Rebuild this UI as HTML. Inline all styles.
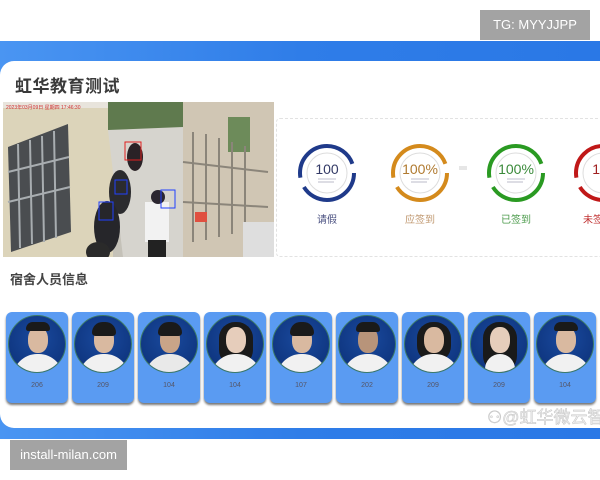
<!DOCTYPE html>
<html><head><meta charset="utf-8"><style>
*{margin:0;padding:0;box-sizing:border-box}
body{width:600px;height:480px;background:#fff;position:relative;overflow:hidden;font-family:"Liberation Sans","Noto Sans CJK SC",sans-serif}
.band{position:absolute;left:0;top:41px;width:600px;height:398px;background:linear-gradient(90deg,#4a95f2,#2f7de8 50%,#2a78e6)}
.sheet{position:absolute;left:0;top:61px;width:600px;height:367px;background:#fff;border-radius:14px 0 0 14px}
.tg{position:absolute;left:480px;top:10px;width:110px;height:30px;background:#a3a3a3;color:#fff;font-size:13px;line-height:30px;text-align:center}
.inst{position:absolute;left:10px;top:440px;width:117px;height:30px;background:#a3a3a3;color:#fff;font-size:13px;line-height:30px;text-align:center}
.title{position:absolute;left:15px;top:72px;font-size:17px;font-weight:bold;color:#3a3a3a;letter-spacing:0.5px}
.sub{position:absolute;left:10px;top:269px;font-size:13px;font-weight:bold;color:#444}
.photo{position:absolute;left:3px;top:102px;width:271px;height:155px}
.stats{position:absolute;left:276px;top:118px;width:330px;height:139px;border:1px dashed #e2e2e2;border-radius:4px}
.card{position:absolute;top:312px;width:62px;height:91px;background:#5a9bf2;border-radius:6px;box-shadow:0 2px 2px #777}
.av{position:absolute;left:2px;top:3px;width:58px;height:58px;border-radius:50%;background:radial-gradient(circle at 50% 40%,#1a4a9e,#0b2f76);border:1.5px solid #3c7a68;overflow:hidden}
.face{position:absolute;left:19px;top:11px;width:20px;height:26px;border-radius:45%;background:#d9b9a0}
.hair{position:absolute;left:17px;top:6px;width:24px;height:14px;border-radius:12px 12px 4px 4px;background:#1a1a1a}
.shirt{position:absolute;left:4px;top:38px;width:50px;height:30px;border-radius:24px 24px 0 0;background:#f1f1f1}
.num{position:absolute;left:0;top:70px;width:62px;text-align:center;font-size:7px;color:#556}
.wm{position:absolute;left:487px;top:403px;font-size:17px;color:#f0f0f0;-webkit-text-stroke:0.5px #c4c4c4;white-space:nowrap}
</style></head><body>
<div class="band"></div>
<div class="sheet"></div>
<div class="tg">TG: MYYJJPP</div>
<div class="inst">install-milan.com</div>
<div class="title">虹华教育测试</div>
<svg class="photo" viewBox="0 0 271 155">
<rect width="271" height="155" fill="#c4c1b8"/>
<rect x="0" y="0" width="110" height="155" fill="#dcd4ba"/>
<rect x="0" y="0" width="271" height="6" fill="#e8e4dc"/>
<polygon points="5,45 65,22 68,130 8,150" fill="#4a4d50"/>
<g stroke="#a8adb0" stroke-width="2"><line x1="15" y1="42" x2="17" y2="146"/><line x1="27" y1="38" x2="29" y2="142"/><line x1="39" y1="34" x2="41" y2="140"/><line x1="51" y1="29" x2="53" y2="136"/><line x1="5" y1="70" x2="66" y2="55"/><line x1="5" y1="100" x2="67" y2="85"/></g>
<rect x="105" y="0" width="80" height="28" fill="#5f7a4e"/>
<polygon points="105,28 180,25 185,155 120,155" fill="#d6d4ce"/>
<rect x="180" y="0" width="91" height="155" fill="#d0c6b4"/>
<rect x="225" y="15" width="22" height="35" fill="#6d8b5a"/>
<g stroke="#8b857a" stroke-width="2"><line x1="190" y1="30" x2="190" y2="140"/><line x1="203" y1="32" x2="203" y2="138"/><line x1="216" y1="36" x2="216" y2="135"/><line x1="229" y1="40" x2="229" y2="132"/><line x1="242" y1="44" x2="242" y2="130"/><line x1="180" y1="60" x2="265" y2="70"/><line x1="180" y1="100" x2="265" y2="105"/></g>
<rect x="240" y="120" width="31" height="35" fill="#dedede"/>
<ellipse cx="132" cy="55" rx="8" ry="14" fill="#2a2226"/>
<ellipse cx="117" cy="90" rx="11" ry="22" fill="#2b2b2e"/>
<ellipse cx="104" cy="125" rx="13" ry="26" fill="#26262a"/>
<rect x="142" y="100" width="24" height="40" fill="#f2f2f2"/>
<circle cx="155" cy="95" r="7" fill="#2b2630"/>
<rect x="145" y="138" width="18" height="17" fill="#222"/>
<ellipse cx="95" cy="150" rx="12" ry="10" fill="#2a2a2a"/>
<rect x="122" y="40" width="16" height="18" fill="none" stroke="#e02020" stroke-width="1"/>
<rect x="112" y="78" width="12" height="14" fill="none" stroke="#2040ff" stroke-width="1"/>
<rect x="96" y="100" width="14" height="18" fill="none" stroke="#2040ff" stroke-width="1"/>
<rect x="158" y="88" width="14" height="18" fill="none" stroke="#2040ff" stroke-width="1"/>
<rect x="192" y="110" width="12" height="10" fill="#e05040"/>
<text x="3" y="7" font-size="5" fill="#d03030">2023年03月09日 星期四 17:46:30</text>
</svg>
<div class="stats"></div>
<svg style="position:absolute;left:276px;top:118px" width="324" height="139">
<g fill="none" stroke-width="4">
<circle cx="51" cy="55" r="27" stroke="#1f3a8a" stroke-dasharray="70 10 80 10"/>
<circle cx="144" cy="55" r="27" stroke="#d48a1c" stroke-dasharray="70 10 80 10"/>
<circle cx="240" cy="55" r="27" stroke="#2a9a22" stroke-dasharray="70 10 80 10"/>
<circle cx="327" cy="55" r="27" stroke="#c01818" stroke-dasharray="70 10 80 10"/>
</g>
<g fill="none" stroke="#ddd" stroke-width="1"><circle cx="51" cy="55" r="20"/><circle cx="144" cy="55" r="20"/><circle cx="240" cy="55" r="20"/><circle cx="327" cy="55" r="20"/></g>
<g font-size="14" text-anchor="middle"><text x="51" y="56" fill="#333a66">100</text><text x="144" y="56" fill="#b07a30">100%</text><text x="240" y="56" fill="#3a8a3a">100%</text><text x="324" y="56" fill="#a02020">10</text></g>
<g stroke="#aab" stroke-width="0.8"><line x1="42" y1="61" x2="60" y2="61"/><line x1="42" y1="64" x2="58" y2="64"/><line x1="135" y1="61" x2="153" y2="61"/><line x1="135" y1="64" x2="151" y2="64"/><line x1="231" y1="61" x2="249" y2="61"/><line x1="231" y1="64" x2="247" y2="64"/></g>
<rect x="183" y="48" width="8" height="4" fill="#e6e6e6"/>
<g font-size="10" text-anchor="middle" font-family="Liberation Sans,Noto Sans CJK SC,sans-serif"><text x="51" y="105" fill="#4a5080">请假</text><text x="144" y="105" fill="#c09870">应签到</text><text x="240" y="105" fill="#4a9a4a">已签到</text><text x="322" y="105" fill="#c03030">未签到</text></g>
</svg>
<div class="sub">宿舍人员信息</div>
<div class="card" style="left:6px"><div class="av"><div class="shirt"></div><div class="face"></div><div class="hair" style="height:9px"></div></div><div class="num">206</div></div>
<div class="card" style="left:72px"><div class="av"><div class="shirt"></div><div class="face"></div><div class="hair"></div></div><div class="num">209</div></div>
<div class="card" style="left:138px"><div class="av"><div class="shirt" style="background:#e9e9e9"></div><div class="face" style="background:#c9a488"></div><div class="hair"></div></div><div class="num">104</div></div>
<div class="card" style="left:204px"><div class="av"><div class="hair" style="left:12px;width:34px;height:44px;border-radius:16px"></div><div class="shirt"></div><div class="face" style="background:#e6cdbb"></div></div><div class="num">104</div></div>
<div class="card" style="left:270px"><div class="av"><div class="shirt"></div><div class="face"></div><div class="hair"></div></div><div class="num">107</div></div>
<div class="card" style="left:336px"><div class="av"><div class="shirt"></div><div class="face" style="background:#b8947a"></div><div class="hair" style="height:10px"></div></div><div class="num">202</div></div>
<div class="card" style="left:402px"><div class="av"><div class="hair" style="left:12px;width:34px;height:40px;border-radius:16px"></div><div class="shirt"></div><div class="face"></div></div><div class="num">209</div></div>
<div class="card" style="left:468px"><div class="av"><div class="hair" style="left:12px;width:34px;height:50px;border-radius:16px"></div><div class="shirt" style="left:14px;width:30px"></div><div class="face" style="background:#e6cdbb"></div></div><div class="num">209</div></div>
<div class="card" style="left:534px"><div class="av"><div class="shirt"></div><div class="face"></div><div class="hair" style="height:9px"></div></div><div class="num">104</div></div>
<div class="wm">⚇@虹华微云智</div>
</body></html>
